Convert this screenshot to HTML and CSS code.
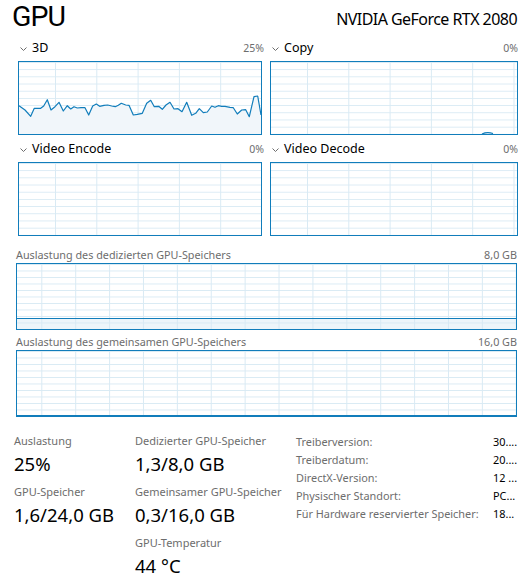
FILE: index.html
```html
<!DOCTYPE html>
<html lang="de">
<head>
<meta charset="utf-8">
<title>GPU</title>
<link rel="stylesheet" href="styles.css">
</head>
<body>
<div class="page">
  <header class="head">
    <h1 class="title">GPU</h1>
    <div class="model">NVIDIA GeForce RTX 2080</div>
  </header>

  <section class="engines">
    <div class="engine">
      <div class="eng-head">
        <svg class="chev" viewBox="0 0 7 4"><polyline points="0.5,0.5 3.5,3.5 6.5,0.5"/></svg>
        <span class="eng-name">3D</span>
        <span class="eng-pct">25%</span>
      </div>
      <div class="chart chart-eng chart-left">
        <svg class="plot" viewBox="0 0 242 72" preserveAspectRatio="none">
          <polygon class="fill" points="0,43.7 6,48 11.7,54.3 15.3,46.3 21.7,46.3 24.7,44 28.3,37.7 32,48 36,44.7 40,40.3 44.3,49 48.3,43.7 51.7,47 55,44.7 58.3,46 62,45.7 66,45.7 69.7,53 73.7,44 77.3,42 80.7,44.3 85,43.3 88.7,43 92.7,44 96.3,44.7 99.3,43.3 102.3,41.3 106.7,43 110,43.3 114.3,53 118.3,52.3 123.3,51.3 127.7,41.3 131.7,38.3 135.3,44.7 139.7,44.3 143.3,47.3 147,43 151,40.3 155,47 159,46.7 163,49.7 167.7,40.3 172.7,53.3 176.7,51.3 180.3,46.7 184.3,50.7 188.3,50 192.7,44 196,45.3 199.3,43.7 202.7,44.3 206,44.3 211,45.3 214.3,45.7 218.3,52 222.7,48 226.7,47.7 230.3,54.7 235,34.7 238.7,34 242,53 242,72 0,72"/>
          <polyline class="line" points="0,43.7 6,48 11.7,54.3 15.3,46.3 21.7,46.3 24.7,44 28.3,37.7 32,48 36,44.7 40,40.3 44.3,49 48.3,43.7 51.7,47 55,44.7 58.3,46 62,45.7 66,45.7 69.7,53 73.7,44 77.3,42 80.7,44.3 85,43.3 88.7,43 92.7,44 96.3,44.7 99.3,43.3 102.3,41.3 106.7,43 110,43.3 114.3,53 118.3,52.3 123.3,51.3 127.7,41.3 131.7,38.3 135.3,44.7 139.7,44.3 143.3,47.3 147,43 151,40.3 155,47 159,46.7 163,49.7 167.7,40.3 172.7,53.3 176.7,51.3 180.3,46.7 184.3,50.7 188.3,50 192.7,44 196,45.3 199.3,43.7 202.7,44.3 206,44.3 211,45.3 214.3,45.7 218.3,52 222.7,48 226.7,47.7 230.3,54.7 235,34.7 238.7,34 242,53"/>
        </svg>
      </div>
    </div>
    <div class="engine">
      <div class="eng-head">
        <svg class="chev" viewBox="0 0 7 4"><polyline points="0.5,0.5 3.5,3.5 6.5,0.5"/></svg>
        <span class="eng-name">Copy</span>
        <span class="eng-pct">0%</span>
      </div>
      <div class="chart chart-eng">
        <svg class="plot" viewBox="0 0 246 72" preserveAspectRatio="none">
          <path class="line" d="M211 72 Q216 69.5 222 71.5"/>
        </svg>
      </div>
    </div>
    <div class="engine">
      <div class="eng-head">
        <svg class="chev" viewBox="0 0 7 4"><polyline points="0.5,0.5 3.5,3.5 6.5,0.5"/></svg>
        <span class="eng-name">Video Encode</span>
        <span class="eng-pct">0%</span>
      </div>
      <div class="chart chart-eng chart-left"></div>
    </div>
    <div class="engine">
      <div class="eng-head">
        <svg class="chev" viewBox="0 0 7 4"><polyline points="0.5,0.5 3.5,3.5 6.5,0.5"/></svg>
        <span class="eng-name">Video Decode</span>
        <span class="eng-pct">0%</span>
      </div>
      <div class="chart chart-eng"></div>
    </div>
  </section>

  <section class="mem">
    <div class="mem-head">
      <span>Auslastung des dedizierten GPU-Speichers</span>
      <span>8,0 GB</span>
    </div>
    <div class="chart chart-mem">
      <div class="mem-fill" style="height: 16.25%"></div>
    </div>
  </section>

  <section class="mem mem-second">
    <div class="mem-head">
      <span>Auslastung des gemeinsamen GPU-Speichers</span>
      <span>16,0 GB</span>
    </div>
    <div class="chart chart-mem">
      <div class="mem-fill" style="height: 1.9%"></div>
    </div>
  </section>

  <section class="stats">
    <div class="stat-col col-a">
      <div class="stat">
        <div class="stat-label">Auslastung</div>
        <div class="stat-value">25%</div>
      </div>
      <div class="stat">
        <div class="stat-label">GPU-Speicher</div>
        <div class="stat-value">1,6/24,0 GB</div>
      </div>
    </div>
    <div class="stat-col col-b">
      <div class="stat">
        <div class="stat-label">Dedizierter GPU-Speicher</div>
        <div class="stat-value">1,3/8,0 GB</div>
      </div>
      <div class="stat">
        <div class="stat-label">Gemeinsamer GPU-Speicher</div>
        <div class="stat-value">0,3/16,0 GB</div>
      </div>
      <div class="stat">
        <div class="stat-label">GPU-Temperatur</div>
        <div class="stat-value">44 °C</div>
      </div>
    </div>
    <dl class="info">
      <dt>Treiberversion:</dt><dd>30....</dd>
      <dt>Treiberdatum:</dt><dd>20....</dd>
      <dt>DirectX-Version:</dt><dd>12 ...</dd>
      <dt>Physischer Standort:</dt><dd>PC...</dd>
      <dt>Für Hardware reservierter Speicher:</dt><dd>18...</dd>
    </dl>
  </section>
</div>
</body>
</html>
```
FILE: styles.css
```css
* { box-sizing: border-box; }

html, body {
  margin: 0;
  padding: 0;
  background: #ffffff;
}

body {
  font-family: "Noto Sans", "Open Sans", sans-serif;
  color: #000000;
  width: 524px;
  height: 577px;
  overflow: hidden;
}

.page {
  display: flex;
  flex-direction: column;
}

/* header */
.head {
  height: 39px;
  display: flex;
  justify-content: space-between;
  align-items: flex-start;
  padding: 0 7px 0 12px;
}

.title {
  margin: 0;
  font-family: Roboto, "Noto Sans", sans-serif;
  font-size: 28.5px;
  font-weight: 400;
  line-height: normal;
  letter-spacing: -1px;
}

.model {
  font-size: 16px;
  line-height: 20px;
  margin-top: 9px;
  letter-spacing: -0.55px;
}

/* engine charts */
.engines {
  display: grid;
  grid-template-columns: 246px 248px;
  column-gap: 6px;
  row-gap: 5px;
  padding-left: 18px;
}

.eng-head {
  height: 22px;
  padding-bottom: 4px;
  display: flex;
  align-items: center;
  line-height: 18px;
}

.chev {
  width: 7px;
  height: 4px;
  margin: 1px 5px 0 2px;
  fill: none;
  stroke: #6d6d6d;
  stroke-width: 1;
}

.eng-name {
  font-size: 12.5px;
  flex: 1;
}

.eng-pct {
  font-size: 10.5px;
  color: #6d6d6d;
}

.chart {
  border: 1px solid #117dbb;
  background-color: #ffffff;
  background-image:
    linear-gradient(to right, #d9eaf4 1px, transparent 1px),
    linear-gradient(to bottom, #d9eaf4 1px, transparent 1px);
}

.chart-eng {
  height: 74px;
  background-size: 41.3px 100%, 100% 7.2px;
  background-position: 36px 0, 0 7.2px;
}

.chart-left {
  margin-right: 2px;
}

.plot {
  display: block;
  width: 100%;
  height: 100%;
}

.plot .fill {
  fill: #f1f6fa;
  stroke: none;
}

.plot .line {
  fill: none;
  stroke: #117dbb;
  stroke-width: 1.2;
  vector-effect: non-scaling-stroke;
  stroke-linejoin: round;
}

/* memory charts */
.mem {
  margin-top: 9px;
  padding: 0 7px 0 16px;
}

.mem-second {
  margin-top: 2px;
}

.mem-head {
  height: 18px;
  display: flex;
  justify-content: space-between;
  align-items: center;
  font-size: 10.8px;
  color: #6d6d6d;
}

.chart-mem {
  height: 67px;
  display: flex;
  flex-direction: column;
  justify-content: flex-end;
  background-size: 33.9px 100%, 100% 6.5px;
  background-position: 24.3px 0, 0 6.5px;
}

.mem-fill {
  border-top: 1px solid #117dbb;
  background: rgba(214, 232, 244, 0.45);
}

/* stats */
.stats {
  display: flex;
  padding: 16px 0 0 14px;
}

.stat-col {
  display: flex;
  flex-direction: column;
}

.col-a { width: 121px; }
.col-b { width: 161px; }

.stat {
  height: 51px;
}

.stat-label {
  font-size: 11px;
  line-height: 16px;
  color: #6d6d6d;
}

.stat-value {
  font-size: 18.5px;
  line-height: 22px;
  margin-top: 4px;
  white-space: nowrap;
}

.info {
  margin: 0;
  display: grid;
  grid-template-columns: 197px auto;
  grid-auto-rows: 18px;
  font-size: 10.9px;
  line-height: 18px;
}

.info dt {
  color: #6d6d6d;
}

.info dd {
  margin: 0;
  color: #000000;
}
```
